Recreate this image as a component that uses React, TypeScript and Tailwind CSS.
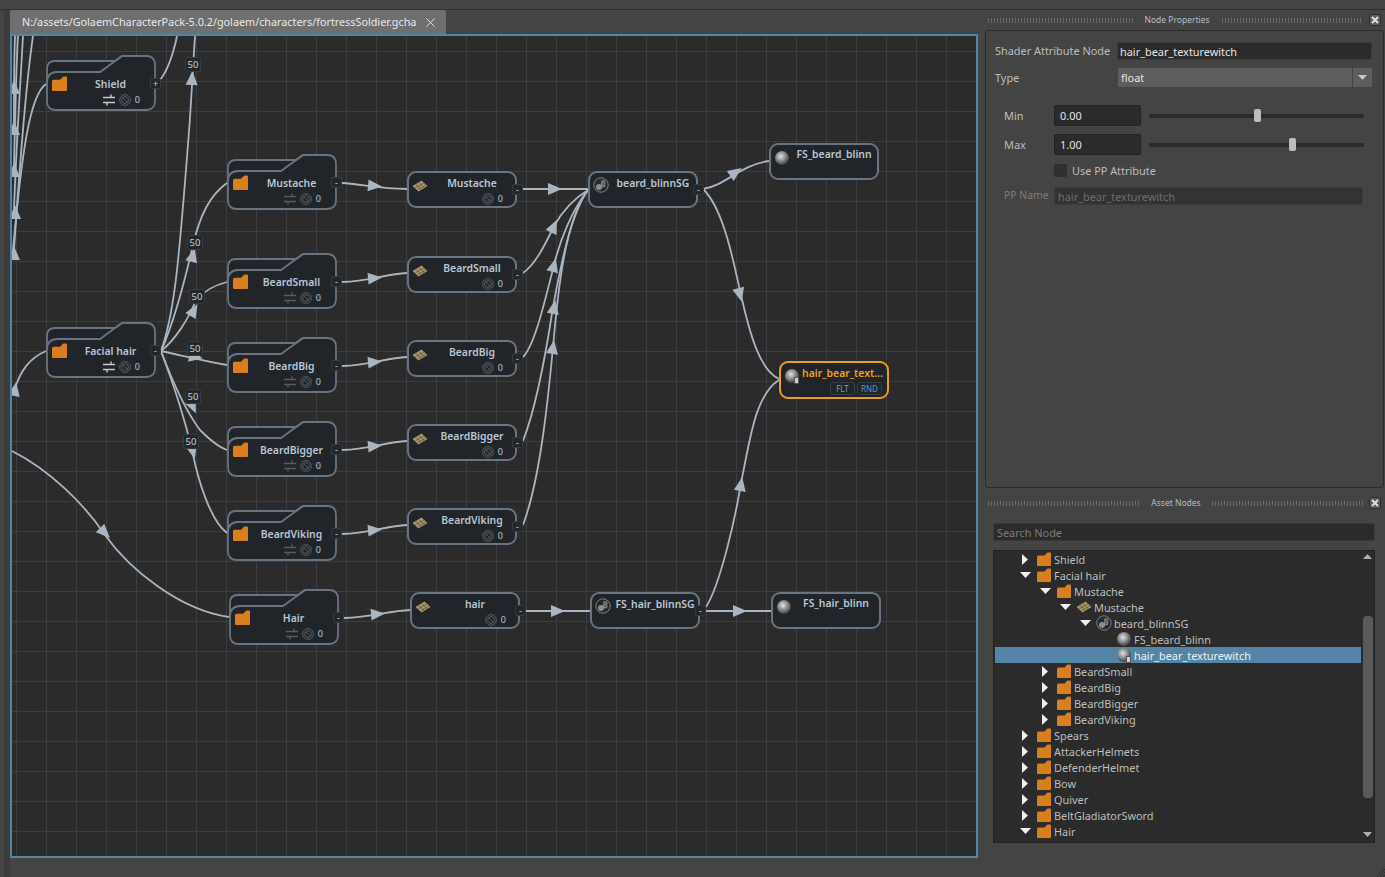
import type { ReactNode } from "react"

type GroupNode = { x: number; y: number; label: string; port: string; bright?: boolean }
type ShadeNode = { x: number; y: number; label: string; kind: "tex" | "sg" | "ball"; port?: boolean; count?: boolean }
type Row = { depth: number; arrow?: "right" | "down"; icon: "folder" | "tex" | "sg" | "ball" | "attr"; label: string; selected?: boolean }

const groups: GroupNode[] = [
  { x: 46, y: 55, label: "Shield", port: "+", bright: true },
  { x: 46, y: 322, label: "Facial hair", port: "-", bright: true },
  { x: 227, y: 154, label: "Mustache", port: "-" },
  { x: 227, y: 253, label: "BeardSmall", port: "-" },
  { x: 227, y: 337, label: "BeardBig", port: "-" },
  { x: 227, y: 421, label: "BeardBigger", port: "-" },
  { x: 227, y: 505, label: "BeardViking", port: "-" },
  { x: 229, y: 589, label: "Hair", port: "-" },
]

const shades: ShadeNode[] = [
  { x: 407, y: 171, label: "Mustache", kind: "tex", port: true, count: true },
  { x: 407, y: 256, label: "BeardSmall", kind: "tex", port: true, count: true },
  { x: 407, y: 340, label: "BeardBig", kind: "tex", port: true, count: true },
  { x: 407, y: 424, label: "BeardBigger", kind: "tex", port: true, count: true },
  { x: 407, y: 508, label: "BeardViking", kind: "tex", port: true, count: true },
  { x: 410, y: 592, label: "hair", kind: "tex", port: true, count: true },
  { x: 588, y: 171, label: "beard_blinnSG", kind: "sg", port: true },
  { x: 590, y: 592, label: "FS_hair_blinnSG", kind: "sg", port: true },
  { x: 769, y: 143, label: "FS_beard_blinn", kind: "ball" },
  { x: 771, y: 592, label: "FS_hair_blinn", kind: "ball" },
]

const edges = [
  "M33 36 C28 70 20 160 14 250",
  "M23 36 C20 90 16 150 14 210",
  "M18 36 C16 70 15 120 14 168",
  "M15 36 C14 60 14 90 14 128",
  "M46 84 C30 95 22 150 13 250",
  "M46 351 C30 358 20 370 14 392",
  "M229 617 C180 610 130 570 105 535 C85 505 50 470 12 451",
  "M160 80 C168 70 173 55 177 36",
  "M161 351 C176 310 180 240 186 170 S192 80 195 36",
  "M161 351 C175 320 185 280 193 245 C200 215 210 195 227 183",
  "M161 351 C175 340 188 320 196 300 C205 290 215 285 227 282",
  "M161 351 C180 355 200 360 227 365",
  "M161 351 C170 375 185 410 200 430 C210 440 218 447 227 450",
  "M161 351 C172 380 185 420 192 450 C198 480 210 520 227 533",
  "M342 183 C360 184 380 189 407 189",
  "M342 282 C370 281 385 274 407 273",
  "M342 366 C370 365 385 358 407 357",
  "M342 450 C370 449 385 442 407 441",
  "M342 534 C370 533 385 526 407 525",
  "M344 618 C372 617 388 611 410 610",
  "M522 189 H588",
  "M523 273 C535 265 545 245 554 226 C562 212 575 198 588 190",
  "M523 357 C535 345 545 300 554 265 C560 240 572 210 588 190",
  "M523 441 C535 410 545 360 553 307 C560 270 570 215 588 190",
  "M523 525 C540 480 548 400 553 347 C558 290 565 220 588 190",
  "M703 189 C725 186 740 165 769 161",
  "M703 189 C725 210 735 270 741 295 C750 335 760 370 779 379",
  "M524 611 H591",
  "M706 611 H771",
  "M706 607 C720 585 735 520 741 483 C750 440 755 395 779 380",
]

const arrows: [number, number, number][] = [
  [14, 87, 0], [14, 128, 0], [14, 170, 0], [15, 212, 0], [14, 253, 0], [15, 389, 10],
  [105, 533, 135], [192, 78, 3], [193, 255, 15], [194, 310, 30], [196, 357, 100], [193, 407, 155], [193, 452, 165],
  [375, 186, 95], [375, 278, 85], [375, 362, 85], [375, 446, 85], [375, 530, 85], [378, 614, 85],
  [555, 189, 90], [554, 226, 25], [554, 265, 15], [554, 307, 10], [553, 347, 8],
  [736, 172, 55], [740, 295, 165], [741, 484, 10], [558, 611, 90], [740, 611, 90],
]

const weights = [
  { x: 193, y: 64 }, { x: 195, y: 242 }, { x: 197, y: 296 }, { x: 195, y: 348 }, { x: 193, y: 396 }, { x: 191, y: 441 },
]

const tree: Row[] = [
  { depth: 0, arrow: "right", icon: "folder", label: "Shield" },
  { depth: 0, arrow: "down", icon: "folder", label: "Facial hair" },
  { depth: 1, arrow: "down", icon: "folder", label: "Mustache" },
  { depth: 2, arrow: "down", icon: "tex", label: "Mustache" },
  { depth: 3, arrow: "down", icon: "sg", label: "beard_blinnSG" },
  { depth: 4, icon: "ball", label: "FS_beard_blinn" },
  { depth: 4, icon: "attr", label: "hair_bear_texturewitch", selected: true },
  { depth: 1, arrow: "right", icon: "folder", label: "BeardSmall" },
  { depth: 1, arrow: "right", icon: "folder", label: "BeardBig" },
  { depth: 1, arrow: "right", icon: "folder", label: "BeardBigger" },
  { depth: 1, arrow: "right", icon: "folder", label: "BeardViking" },
  { depth: 0, arrow: "right", icon: "folder", label: "Spears" },
  { depth: 0, arrow: "right", icon: "folder", label: "AttackerHelmets" },
  { depth: 0, arrow: "right", icon: "folder", label: "DefenderHelmet" },
  { depth: 0, arrow: "right", icon: "folder", label: "Bow" },
  { depth: 0, arrow: "right", icon: "folder", label: "Quiver" },
  { depth: 0, arrow: "right", icon: "folder", label: "BeltGladiatorSword" },
  { depth: 0, arrow: "down", icon: "folder", label: "Hair" },
]

function FolderIcon({ size = 14 }: { size?: number }) {
  return (
    <svg width={size} height={size} viewBox="0 0 14 14" className="shrink-0">
      <path d="M0 5 Q0 3.5 1.5 3.5 H7.5 L10.5 0.5 H13 Q14 0.5 14 1.5 V13 Q14 14 13 14 H1 Q0 14 0 13 Z" fill="#d97f1e" />
    </svg>
  )
}

function TexIcon() {
  return (
    <svg width="16" height="12" viewBox="0 0 16 12" className="shrink-0">
      <path d="M0.5 6 L9.5 0.5 L15.5 6 L6.5 11.5 Z" fill="#a8986a" />
      <path d="M3.5 4.2 L9.5 9.7 M6.5 2.4 L12.5 7.9 M3 8 L12 2.8 M5.5 10 L14 4.8" stroke="#5f553a" strokeWidth="0.8" />
    </svg>
  )
}

function SgIcon() {
  return (
    <svg width="16" height="16" viewBox="0 0 16 16" className="shrink-0">
      <circle cx="8" cy="8" r="7.2" fill="#26292b" stroke="#8a8a8a" strokeWidth="0.9" />
      <circle cx="6" cy="10" r="3" fill="#8c8c8c" />
      <rect x="8.5" y="3.5" width="3.5" height="6.5" rx="1" fill="#666" stroke="#aaa" strokeWidth="0.5" />
    </svg>
  )
}

function Ball({ small }: { small?: boolean }) {
  return (
    <div className="relative shrink-0 w-[14px] h-[14px] rounded-full bg-[radial-gradient(circle_at_42%_38%,#e2e2e2_0%,#8a8a8a_40%,#3a3a3a_75%,#1c1c1c_100%)]">
      {small && <div className="absolute right-0 bottom-[-1px] w-[5px] h-[7px] bg-[#d0d0d0] border border-[#555]" />}
    </div>
  )
}

function CountIcon() {
  return (
    <svg width="12" height="12" viewBox="0 0 12 12" className="shrink-0" fill="none" stroke="#5c6368" strokeWidth="0.9">
      <circle cx="6" cy="6" r="5.4" />
      <circle cx="6" cy="6" r="3.4" />
      <path d="M3.5 3.5 L8.5 8.5" />
    </svg>
  )
}

function SwapIcon({ bright }: { bright?: boolean }) {
  return (
    <svg width="12" height="12" viewBox="0 0 12 12" className="shrink-0" fill="none" stroke={bright ? "#c8c8c8" : "#565a5d"} strokeWidth="1.4">
      <path d="M0 3.5 H12 M8 0.5 V3.5 M0 8.5 H12 M4 8.5 V11.5" />
    </svg>
  )
}

function Port({ children, className }: { children: ReactNode; className: string }) {
  return (
    <div className={`absolute w-[11px] h-[11px] rounded-[2px] bg-[#23272b] border border-[#343a40] flex items-center justify-center text-[9px] leading-none text-[#c5d0db] ${className}`}>
      {children}
    </div>
  )
}

function Group({ n }: { n: GroupNode }) {
  return (
    <div className="absolute w-[110px] h-[56px]" style={{ left: n.x - 12, top: n.y - 36 }}>
      <svg width="110" height="56" viewBox="0 0 110 56" className="absolute inset-0">
        <path d="M1 24 V14 Q1 6 9 6 H69 L76 1 H100 Q109 1 109 10 V46 Q109 55 100 55 H10 Q1 55 1 46 Z" fill="#212529" stroke="#68747f" strokeWidth="1.8" />
        <path d="M1 28 Q1 17 11 17 H54 L76 1" fill="none" stroke="#68747f" strokeWidth="1.8" />
      </svg>
      <div className="relative flex flex-col pt-[21px] h-full">
        <div className="flex items-start pl-[6px]">
          <FolderIcon size={15} />
          <div className="flex-1 text-center text-[10.4px] leading-[16px] font-semibold text-[#b9c7d5] whitespace-nowrap">{n.label}</div>
          <div className="w-[2px]" />
        </div>
        <div className="flex items-center justify-end gap-[4px] pr-[16px] mt-[2px]">
          <SwapIcon bright={n.bright} />
          <CountIcon />
          <span className="text-[9px] leading-[12px] text-[#b9c7d5]">0</span>
        </div>
      </div>
      <Port className="left-[104px] top-[23px]">{n.port}</Port>
    </div>
  )
}

function Shade({ n }: { n: ShadeNode }) {
  return (
    <div className="absolute w-[110px] h-[37px] rounded-[9px] border-2 border-[#68747f] bg-[#212529]" style={{ left: n.x - 12, top: n.y - 36 }}>
      <div className={`flex items-start pl-[2px] ${n.kind === "ball" ? "pt-[2px]" : "pt-[3px]"}`}>
        <div className={`w-[18px] flex justify-center shrink-0 ${n.kind === "sg" ? "pt-[1px]" : "pt-[4px]"}`}>
          {n.kind === "tex" ? <TexIcon /> : n.kind === "sg" ? <SgIcon /> : <Ball />}
        </div>
        <div className="flex-1 flex flex-col min-w-0">
          <div className="text-center text-[10.4px] leading-[14px] font-semibold text-[#b9c7d5] whitespace-nowrap">{n.label}</div>
          {n.count && (
            <div className="flex items-center justify-end gap-[4px] pr-[12px] mt-[3px]">
              <CountIcon />
              <span className="text-[9px] leading-[12px] text-[#b9c7d5]">0</span>
            </div>
          )}
        </div>
      </div>
      {n.port && <Port className="left-[103px] top-[11px]">-</Port>}
    </div>
  )
}

function SelectedNode() {
  return (
    <div className="absolute w-[110px] h-[38px] rounded-[9px] border-2 border-[#e6a01e] bg-[#212529] flex pl-[4px] pt-[4px]" style={{ left: 779 - 12, top: 361 - 36 }}>
      <div className="pt-[2px]">
        <Ball small />
      </div>
      <div className="flex flex-col flex-1 pl-[3px]">
        <div className="text-[10.4px] leading-[13px] font-semibold text-[#efa020] whitespace-nowrap">hair_bear_text...</div>
        <div className="flex justify-end gap-[2px] pr-[5px] mt-[2px] text-[8px] leading-[11px]">
          <span className="w-[25px] h-[13px] rounded-[3px] border border-[#383e44] text-center text-[#8d99a5]">FLT</span>
          <span className="w-[25px] h-[13px] rounded-[3px] border border-[#383e44] text-center text-[#5f93c8]">RND</span>
        </div>
      </div>
    </div>
  )
}

function Canvas() {
  return (
    <div className="relative h-[824px] w-[968px] overflow-hidden border-2 border-[#5285a6] bg-[#2b2b2b] bg-[linear-gradient(to_right,#3b3d40_1px,transparent_1px),linear-gradient(to_bottom,#3b3d40_1px,transparent_1px)] bg-[size:30px_30px] bg-[position:4px_15px]">
      <svg width="964" height="820" viewBox="12 36 964 820" className="absolute inset-0">
        {edges.map((d) => (
          <path key={d} d={d} fill="none" stroke="#a9b5c0" strokeWidth="1.8" />
        ))}
        {arrows.map(([x, y, a]) => (
          <polygon key={`${x}-${y}`} points="0,-7 6,7 -6,7" fill="#a9b5c0" transform={`translate(${x} ${y}) rotate(${a})`} />
        ))}
      </svg>
      {weights.map((w) => (
        <div key={w.y} className="absolute w-[16px] h-[15px] -ml-[8px] -mt-[7px] rounded-[2px] bg-[#23272b] border border-[#343b42] text-[9.5px] leading-[13px] text-center text-[#c5d0db]" style={{ left: w.x - 12, top: w.y - 36 }}>
          50
        </div>
      ))}
      {groups.map((n) => (
        <Group key={n.label} n={n} />
      ))}
      {shades.map((n) => (
        <Shade key={n.label + n.x} n={n} />
      ))}
      <SelectedNode />
    </div>
  )
}

function Grip({ className }: { className: string }) {
  return <div className={`h-[5px] bg-[radial-gradient(circle,#686868_0.6px,transparent_0.8px)] bg-[size:3px_2px] ${className}`} />
}

function CloseButton() {
  return (
    <div className="w-[12px] h-[12px] rounded-[2px] border border-[#2d2d2d] bg-[#5a5a5a] flex items-center justify-center shrink-0">
      <svg width="8" height="8" viewBox="0 0 8 8" stroke="#e0e0e0" strokeWidth="2">
        <path d="M1 1 L7 7 M7 1 L1 7" />
      </svg>
    </div>
  )
}

function PanelHeader({ title, left, right }: { title: string; left: string; right: string }) {
  return (
    <div className="h-[20px] flex items-center pl-[7px] pr-[4px]">
      <Grip className={left} />
      <div className="flex-1 text-center text-[8.5px] leading-[22px] text-[#b5bdc5] whitespace-nowrap">{title}</div>
      <Grip className={right} />
      <div className="ml-[6px]">
        <CloseButton />
      </div>
    </div>
  )
}

function Slider({ thumb }: { thumb: string }) {
  return (
    <div className="relative ml-[8px] w-[215px] h-[4px] rounded-full bg-[#2a2a2a]">
      <div className={`absolute top-[-5px] w-[7px] h-[13px] rounded-[2px] bg-[#bdbdbd] ${thumb}`} />
    </div>
  )
}

function NodeProperties() {
  return (
    <div className="ml-[5px] mr-[1px] h-[458px] rounded-[3px] border border-[#2c2c2c] pt-[11px] text-[10.9px] text-[#bdbdbd]">
      <div className="flex items-center pl-[9px]">
        <span className="w-[122px] whitespace-nowrap">Shader Attribute Node</span>
        <div className="w-[255px] h-[18px] rounded-[2px] bg-[#2b2b2b] border border-[#3a3a3a] pl-[2px] leading-[17px] text-[#e4e4e4]">hair_bear_texturewitch</div>
      </div>
      <div className="flex items-center pl-[9px] mt-[8px]">
        <span className="w-[123px] pt-[1px]">Type</span>
        <div className="w-[254px] h-[19px] flex bg-[#5d5d5d] rounded-[1px]">
          <span className="flex-1 pl-[3px] leading-[19px] text-[#e4e4e4]">float</span>
          <div className="w-[20px] border-l border-[#444] flex items-center justify-center">
            <svg width="9" height="5" viewBox="0 0 9 5">
              <polygon points="0,0 9,0 4.5,5" fill="#c8c8c8" />
            </svg>
          </div>
        </div>
      </div>
      <div className="flex items-center pl-[18px] mt-[18px]">
        <span className="w-[50px] pt-[2px]">Min</span>
        <div className="w-[87px] h-[21px] rounded-[2px] bg-[#2b2b2b] border border-[#222] pl-[5px] leading-[19px] text-[#e4e4e4]">0.00</div>
        <Slider thumb="left-[105px]" />
      </div>
      <div className="flex items-center pl-[18px] mt-[8px]">
        <span className="w-[50px] pt-[2px]">Max</span>
        <div className="w-[87px] h-[21px] rounded-[2px] bg-[#2b2b2b] border border-[#222] pl-[5px] leading-[19px] text-[#e4e4e4]">1.00</div>
        <Slider thumb="left-[140px]" />
      </div>
      <div className="flex items-center pl-[68px] mt-[9px] h-[13px] leading-[13px]">
        <div className="w-[13px] h-[13px] rounded-[2px] bg-[#2f2f2f]" />
        <span className="ml-[5px]">Use PP Attribute</span>
      </div>
      <div className="flex items-center pl-[18px] mt-[10px] h-[18px] text-[#7c7c7c]">
        <span className="w-[50px] text-[10.4px] whitespace-nowrap">PP Name</span>
        <div className="w-[309px] h-[18px] rounded-[2px] bg-[#333] border border-[#3d3d3d] pl-[3px] leading-[17px] text-[#6c6c6c]">hair_bear_texturewitch</div>
      </div>
    </div>
  )
}

function TreeRow({ row }: { row: Row }) {
  return (
    <div className={`h-[16px] flex items-center ${row.selected ? "bg-[#5285a6] text-[#f0f0f0]" : "text-[#bdbdbd]"}`} style={{ paddingLeft: 24 + row.depth * 20 }}>
      <div className="w-[12px] flex justify-center shrink-0">
        {row.arrow === "right" && (
          <svg width="6" height="11" viewBox="0 0 6 11">
            <polygon points="0,0 6,5.5 0,11" fill="#eeeeee" />
          </svg>
        )}
        {row.arrow === "down" && (
          <svg width="11" height="6" viewBox="0 0 11 6">
            <polygon points="0,0 11,0 5.5,6" fill="#eeeeee" />
          </svg>
        )}
      </div>
      <div className="w-[14px] ml-[6px] mr-[3px] flex justify-center shrink-0">
        {row.icon === "folder" && <FolderIcon />}
        {row.icon === "tex" && <TexIcon />}
        {row.icon === "sg" && <SgIcon />}
        {row.icon === "ball" && <Ball />}
        {row.icon === "attr" && <Ball small />}
      </div>
      <span className="whitespace-nowrap pt-[2px] leading-[14px]">{row.label}</span>
    </div>
  )
}

function AssetNodes() {
  return (
    <div className="mt-[5px]">
      <PanelHeader title="Asset Nodes" left="w-[154px]" right="w-[152px]" />
      <div className="ml-[13px] mt-[10px] w-[382px] h-[18px] rounded-[2px] bg-[#2b2b2b] border border-[#3a3a3a] pl-[3px] text-[10.9px] leading-[17px] text-[#7c7c7c]">Search Node</div>
      <div className="ml-[13px] mt-[9px] w-[382px] h-[293px] flex border border-[#222] bg-[#2b2b2b] text-[10.9px]">
        <div className="flex-1 pl-[1px] overflow-hidden">
          {tree.map((row) => (
            <TreeRow key={row.label + row.depth} row={row} />
          ))}
        </div>
        <div className="w-[13px] flex flex-col items-center shrink-0">
          <svg width="9" height="5" viewBox="0 0 9 5" className="mt-[3px]">
            <polygon points="0,5 9,5 4.5,0" fill="#b0b0b0" />
          </svg>
          <div className="w-[10px] h-[182px] mt-[57px] rounded-[4px] bg-[#5a5a5a]" />
          <svg width="9" height="5" viewBox="0 0 9 5" className="mt-[34px]">
            <polygon points="0,0 9,0 4.5,5" fill="#b0b0b0" />
          </svg>
        </div>
      </div>
    </div>
  )
}

export default function App() {
  return (
    <div className="relative w-[1385px] h-[877px] overflow-hidden bg-[#444444] flex flex-col font-['Noto_Sans','Open_Sans',sans-serif]">
      <div className="h-[10px] border-b border-[#2f2f2f] shrink-0" />
      <div className="flex flex-1">
        <div className="w-[980px] pl-[10px] bg-[linear-gradient(to_right,#444444_4px,#3c3c3c_4px,#3c3c3c_10px,transparent_10px)]">
          <div className="h-[24px] flex">
            <div className="w-[436px] h-[25px] bg-[#6f6f6f] rounded-t-[2px] flex items-center pl-[12px] pr-[11px] text-[10.8px] text-[#e8e8e8] whitespace-nowrap">
              <span className="flex-1">N:/assets/GolaemCharacterPack-5.0.2/golaem/characters/fortressSoldier.gcha</span>
              <svg width="9" height="9" viewBox="0 0 9 9" stroke="#e0e0e0" strokeWidth="1">
                <path d="M0.5 0.5 L8.5 8.5 M8.5 0.5 L0.5 8.5" />
              </svg>
            </div>
          </div>
          <Canvas />
        </div>
        <div className="w-[405px] flex flex-col">
          <PanelHeader title="Node Properties" left="w-[146px]" right="w-[142px]" />
          <NodeProperties />
          <AssetNodes />
        </div>
      </div>
      <svg width="8" height="8" viewBox="0 0 8 8" stroke="#2e2e2e" className="absolute right-0 bottom-0">
        <path d="M0 8 L8 0 M3 8 L8 3 M6 8 L8 6" />
      </svg>
    </div>
  )
}
